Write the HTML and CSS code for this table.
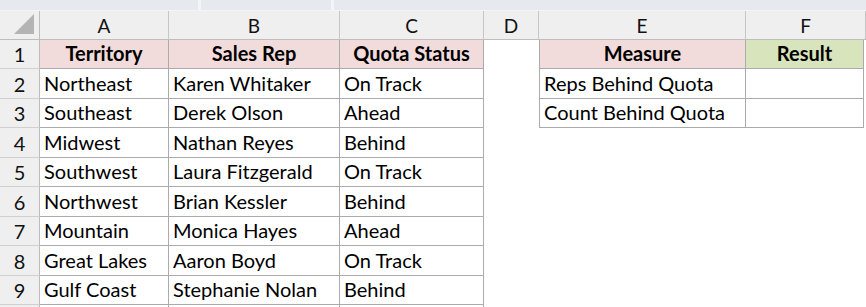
FILE: index.html
```html
<!DOCTYPE html>
<html>
<head>
<meta charset="utf-8">
<link rel="stylesheet" href="styles.css">
</head>
<body>
<div class="topbar">
  <div class="seg s1"></div>
  <div class="seg s2"></div>
  <div class="seg s3"></div>
</div>
<div class="sheet">
  <div class="corner"><span class="tri"></span></div>
  <div class="ch">A</div>
  <div class="ch">B</div>
  <div class="ch">C</div>
  <div class="ch">D</div>
  <div class="ch">E</div>
  <div class="ch last">F</div>

  <div class="rh">1</div>
  <div class="c hd b">Territory</div>
  <div class="c hd b">Sales Rep</div>
  <div class="c hd b">Quota Status</div>
  <div class="c e"></div>
  <div class="c hd b bl">Measure</div>
  <div class="c hd g b">Result</div>

  <div class="rh">2</div>
  <div class="c b">Northeast</div>
  <div class="c b">Karen Whitaker</div>
  <div class="c b">On Track</div>
  <div class="c e"></div>
  <div class="c b bl">Reps Behind Quota</div>
  <div class="c b"></div>

  <div class="rh">3</div>
  <div class="c b">Southeast</div>
  <div class="c b">Derek Olson</div>
  <div class="c b">Ahead</div>
  <div class="c e"></div>
  <div class="c b bl">Count Behind Quota</div>
  <div class="c b"></div>

  <div class="rh">4</div>
  <div class="c b">Midwest</div>
  <div class="c b">Nathan Reyes</div>
  <div class="c b">Behind</div>
  <div class="c e"></div>
  <div class="c e"></div>
  <div class="c e"></div>

  <div class="rh">5</div>
  <div class="c b">Southwest</div>
  <div class="c b">Laura Fitzgerald</div>
  <div class="c b">On Track</div>
  <div class="c e"></div>
  <div class="c e"></div>
  <div class="c e"></div>

  <div class="rh">6</div>
  <div class="c b">Northwest</div>
  <div class="c b">Brian Kessler</div>
  <div class="c b">Behind</div>
  <div class="c e"></div>
  <div class="c e"></div>
  <div class="c e"></div>

  <div class="rh">7</div>
  <div class="c b">Mountain</div>
  <div class="c b">Monica Hayes</div>
  <div class="c b">Ahead</div>
  <div class="c e"></div>
  <div class="c e"></div>
  <div class="c e"></div>

  <div class="rh">8</div>
  <div class="c b">Great Lakes</div>
  <div class="c b">Aaron Boyd</div>
  <div class="c b">On Track</div>
  <div class="c e"></div>
  <div class="c e"></div>
  <div class="c e"></div>

  <div class="rh">9</div>
  <div class="c b">Gulf Coast</div>
  <div class="c b">Stephanie Nolan</div>
  <div class="c b">Behind</div>
  <div class="c e"></div>
  <div class="c e"></div>
  <div class="c e"></div>

  <div class="rh"></div>
  <div class="c b"></div>
  <div class="c b"></div>
  <div class="c b"></div>
  <div class="c e"></div>
  <div class="c e"></div>
  <div class="c e"></div>
</div>
</body>
</html>
```
FILE: styles.css
```css
html, body {
  margin: 0;
  padding: 0;
  background: #ffffff;
  overflow: hidden;
}
body {
  font-family: "Lato", "Liberation Sans", sans-serif;
  font-size: 20px;
  color: #000;
}
.topbar {
  height: 11px;
  display: flex;
  gap: 3px;
  background: #f3f4f6;
}
.seg {
  background: #e6e9ed;
  height: 10px;
}
.s1 { width: 198px; }
.s2 { width: 130px; }
.s3 { flex: 1; }
.sheet {
  display: grid;
  grid-template-columns: 40px 129px 171px 144px 55px 207px 118px 2px;
  grid-template-rows: 29px 29px 30px 29px 30px 29px 30px 29px 30px 29px 10px;
}
.sheet > div {
  box-sizing: border-box;
}
.corner {
  background: #efefef;
  border-right: 1px solid #bdbdbd;
  border-bottom: 1px solid #bdbdbd;
  position: relative;
  grid-column: 1;
}
.tri {
  position: absolute;
  right: 5px;
  bottom: 5px;
  width: 0;
  height: 0;
  border-left: 20px solid transparent;
  border-bottom: 20px solid #b4b4b4;
}
.ch {
  background: #efefef;
  border-right: 1px solid #c6c6c6;
  border-bottom: 1px solid #bdbdbd;
  display: flex;
  align-items: flex-end;
  justify-content: center;
  padding-bottom: 2px;
  color: #111;
  font-size: 19px;
}
.ch.last {
  grid-column: 7 / span 2;
}
.rh {
  background: #efefef;
  border-right: 1px solid #bdbdbd;
  border-bottom: 1px solid #d0d0d0;
  display: flex;
  align-items: flex-end;
  justify-content: center;
  padding-bottom: 2px;
  color: #111;
  grid-column: 1;
}
.c {
  display: flex;
  align-items: flex-end;
  padding: 0 0 3px 4px;
  white-space: nowrap;
  overflow: hidden;
}
.b {
  border-right: 1px solid #ababab;
  border-bottom: 1px solid #ababab;
}
.bl {
  border-left: 1px solid #ababab;
}
.hd {
  background: #f2dcdb;
  font-weight: bold;
  justify-content: center;
  padding-left: 0;
}
.g {
  background: #d8e4bc;
}
```
